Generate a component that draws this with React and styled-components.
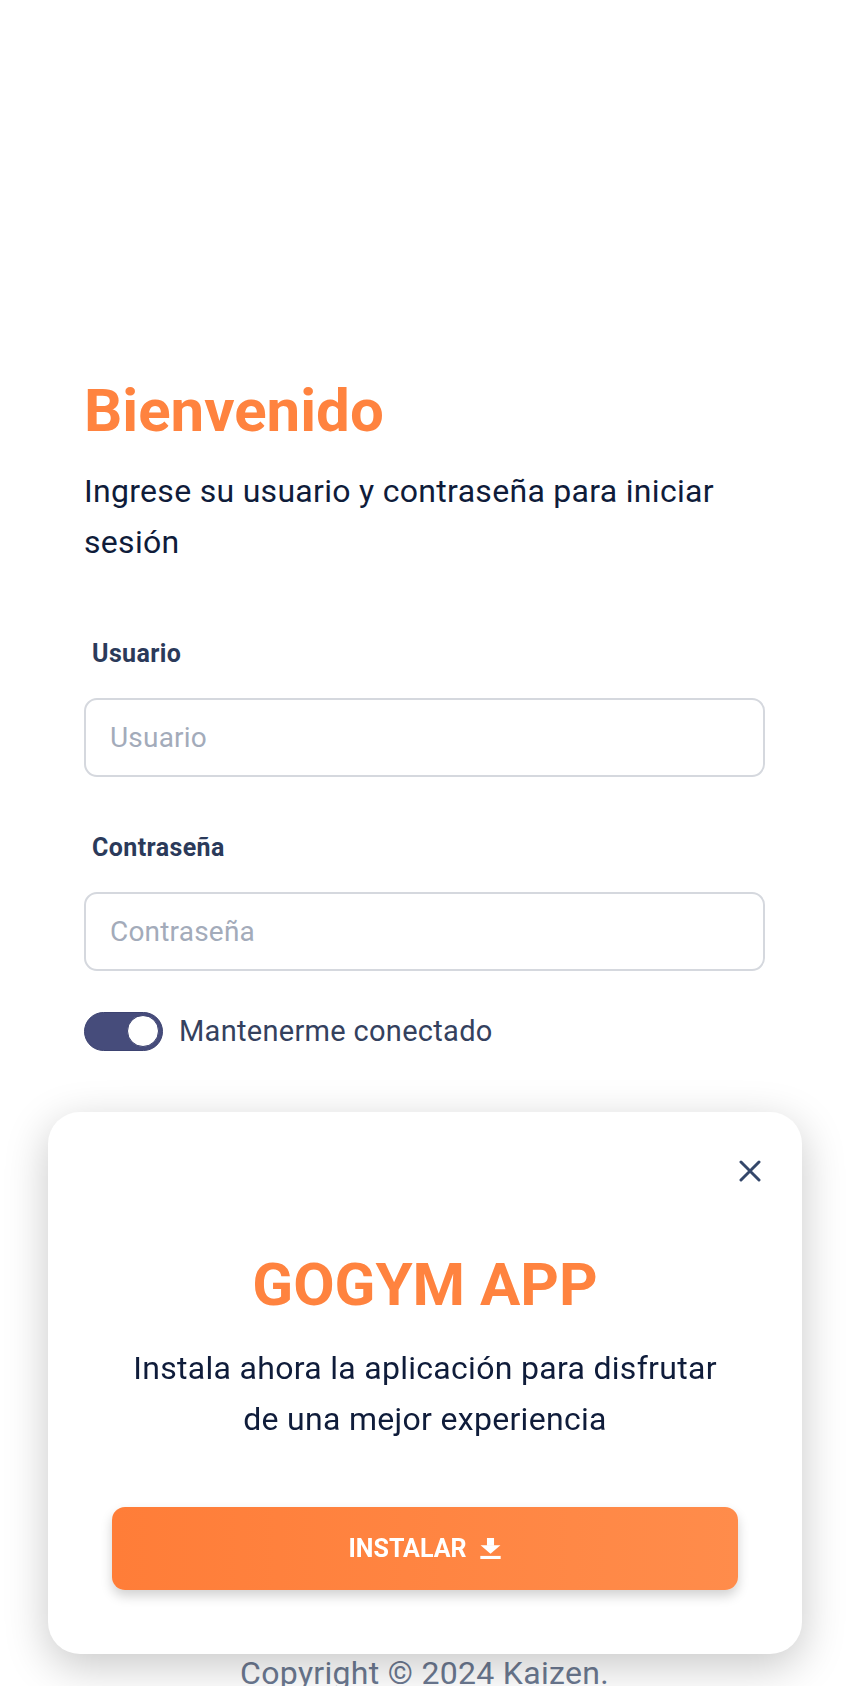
import React, { useState } from "react";
import styled, { createGlobalStyle } from "styled-components";

const orange = "#ff833f";
const navy = "#0f1c3a";

const GlobalStyle = createGlobalStyle`
    html, body {
        margin: 0;
        padding: 0;
        background: #ffffff;
    }
    body {
        font-family: Roboto, "Noto Sans", "Liberation Sans", sans-serif;
    }
    * {
        box-sizing: border-box;
    }
`

const App = () => {
    const [remember, setRemember] = useState(true)
    const [showInstall, setShowInstall] = useState(true)

    return (
        <>
            <GlobalStyle />
            <Page>
                <Form onSubmit={e => e.preventDefault()}>
                    <Title>Bienvenido</Title>
                    <Lead>Ingrese su usuario y contraseña para iniciar sesión</Lead>

                    <Field first>
                        <Label htmlFor="user">Usuario</Label>
                        <Input id="user" type="text" placeholder="Usuario" />
                    </Field>
                    <Field>
                        <Label htmlFor="pass">Contraseña</Label>
                        <Input id="pass" type="password" placeholder="Contraseña" />
                    </Field>

                    <RememberRow>
                        <Switch type="button" on={remember ? 1 : 0} onClick={() => setRemember(!remember)}>
                            <Knob />
                        </Switch>
                        <RememberText>Mantenerme conectado</RememberText>
                    </RememberRow>
                </Form>

                <Footer>Copyright © 2024 Kaizen.</Footer>

                {showInstall && (
                    <InstallCard>
                        <CardHeader>
                            <CloseButton type="button" aria-label="Cerrar" onClick={() => setShowInstall(false)}>
                                <svg width="22" height="22" viewBox="0 0 22 22">
                                    <path d="M2 2 L20 20 M20 2 L2 20" stroke="#34476a" strokeWidth="3" strokeLinecap="round" fill="none" />
                                </svg>
                            </CloseButton>
                        </CardHeader>
                        <CardBody>
                            <CardTitle>GOGYM APP</CardTitle>
                            <CardText>Instala ahora la aplicación para disfrutar de una mejor experiencia</CardText>
                            <InstallButton type="button">
                                INSTALAR
                                <svg width="21" height="21" viewBox="0 0 19 19">
                                    <rect x="6.3" y="0" width="6.4" height="7" fill="#fff" />
                                    <polygon points="0.5,6.6 18.5,6.6 9.5,14.3" fill="#fff" />
                                    <rect x="0.3" y="16.2" width="18.4" height="2.8" fill="#fff" />
                                </svg>
                            </InstallButton>
                        </CardBody>
                    </InstallCard>
                )}
            </Page>
        </>
    )
}

const Page = styled.main`
    height: 100vh;
    overflow: hidden;
    display: flex;
    flex-direction: column;
    padding: 375px 85px 0 84px;
`
const Form = styled.form`
    display: flex;
    flex-direction: column;
`
const Title = styled.h1`
    margin: 0;
    font-size: 60px;
    line-height: 72px;
    font-weight: 700;
    color: ${orange};
`
const Lead = styled.p`
    margin: 19px 0 0 0;
    font-size: 32px;
    line-height: 51px;
    letter-spacing: 0.3px;
    color: ${navy};
`
const Field = styled.div`
    display: flex;
    flex-direction: column;
    margin-top: ${props => props.first ? '68px' : '53px'};
`
const Label = styled.label`
    padding-left: 8px;
    font-size: 25px;
    line-height: 36px;
    font-weight: 700;
    letter-spacing: 0.4px;
    color: #2b3a5a;
`
const Input = styled.input`
    margin-top: 26px;
    height: 79px;
    border: 2px solid #d5d8de;
    border-radius: 13px;
    padding: 0 24px;
    font-family: inherit;
    font-size: 28px;
    letter-spacing: 0.2px;
    color: ${navy};
    outline: none;
    &::placeholder {
        color: #a3abba;
    }
`
const RememberRow = styled.div`
    display: flex;
    align-items: center;
    gap: 16px;
    margin-top: 40px;
`
const Switch = styled.button`
    width: 79px;
    height: 39px;
    padding: 3px 3px;
    border: 1px solid #3d4371;
    border-radius: 20px;
    background: ${props => props.on ? '#464c7b' : '#d5d8de'};
    display: flex;
    align-items: center;
    justify-content: ${props => props.on ? 'flex-end' : 'flex-start'};
    cursor: pointer;
`
const Knob = styled.span`
    width: 32px;
    height: 32px;
    border-radius: 50%;
    background: #ffffff;
    border: 1px solid #3d4371;
`
const RememberText = styled.span`
    font-size: 29px;
    line-height: 40px;
    letter-spacing: 0.3px;
    color: #34415e;
`
const Footer = styled.footer`
    margin-top: auto;
    margin-bottom: -4px;
    text-align: center;
    font-size: 32px;
    line-height: 34px;
    letter-spacing: 0.3px;
    color: #6c7991;
`
const InstallCard = styled.section`
    position: fixed;
    left: 48px;
    right: 48px;
    bottom: 32px;
    display: flex;
    flex-direction: column;
    padding: 40px 33px 64px 64px;
    background: #ffffff;
    border-radius: 32px;
    box-shadow: 0 12px 44px rgba(0, 0, 0, 0.22);
`
const CardHeader = styled.div`
    display: flex;
    justify-content: flex-end;
`
const CloseButton = styled.button`
    width: 38px;
    height: 38px;
    padding: 0;
    border: none;
    background: none;
    display: flex;
    align-items: center;
    justify-content: center;
    cursor: pointer;
`
const CardBody = styled.div`
    display: flex;
    flex-direction: column;
    align-items: center;
    padding-right: 31px;
    text-align: center;
`
const CardTitle = styled.h2`
    margin: 59px 0 0 0;
    font-size: 60px;
    line-height: 72px;
    font-weight: 700;
    color: ${orange};
`
const CardText = styled.p`
    max-width: 600px;
    margin: 22px 0 0 0;
    font-size: 32px;
    line-height: 51px;
    letter-spacing: 0.3px;
    color: ${navy};
`
const InstallButton = styled.button`
    align-self: stretch;
    margin-top: 62px;
    height: 83px;
    border: none;
    border-radius: 13px;
    background: linear-gradient(90deg, #ff7d38, #ff8c4b);
    box-shadow: 0 6px 12px rgba(0, 0, 0, 0.18);
    display: flex;
    align-items: center;
    justify-content: center;
    gap: 14px;
    font-family: inherit;
    font-size: 25px;
    font-weight: 700;
    color: #ffffff;
    cursor: pointer;
`

export default App
